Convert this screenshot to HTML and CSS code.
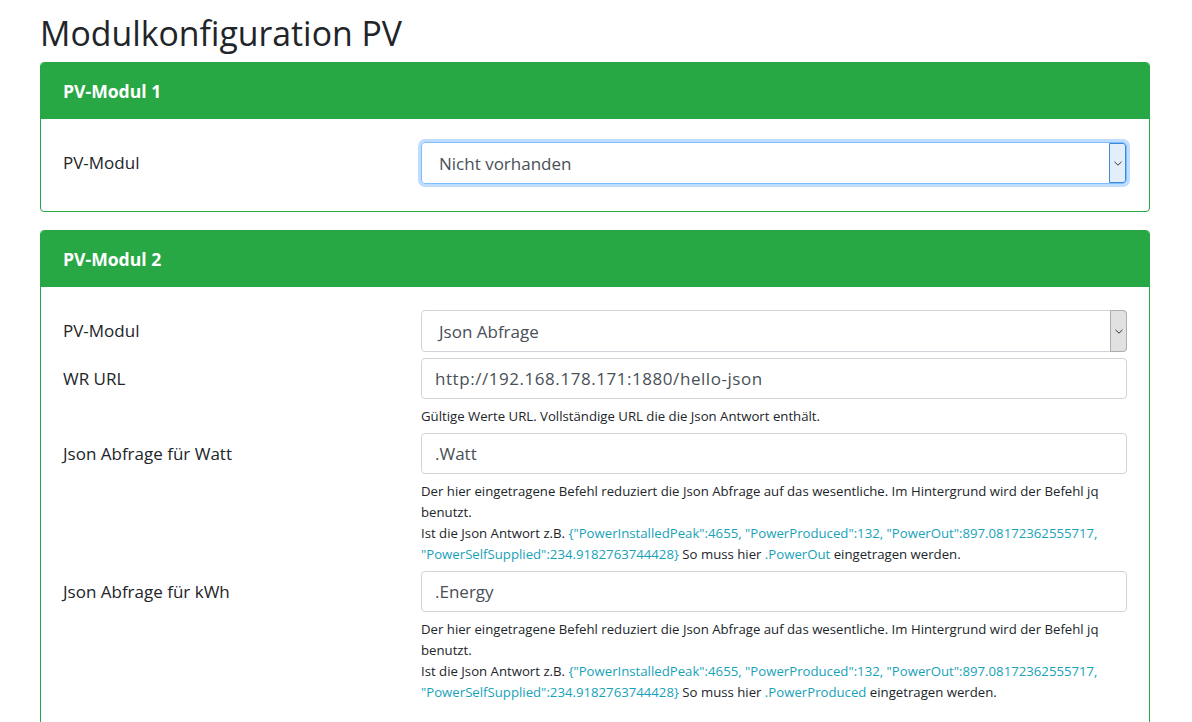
FILE: index.html
```html
<!DOCTYPE html>
<html lang="de">
<head>
<meta charset="utf-8">
<title>Modulkonfiguration PV</title>
<link rel="stylesheet" href="styles.css">
</head>
<body>
<div class="page">
  <h1 class="title">Modulkonfiguration PV</h1>

  <section class="card">
    <div class="card-header">PV-Modul 1</div>
    <div class="card-body">
      <div class="row">
        <label class="label">PV-Modul</label>
        <div class="field">
          <div class="select focused">
            <span class="select-text">Nicht vorhanden</span>
            <span class="select-btn"><svg width="8" height="5" viewBox="0 0 8 5"><path d="M0.5 0.8 L4 4.2 L7.5 0.8" fill="none" stroke="#333" stroke-width="1"/></svg></span>
          </div>
        </div>
      </div>
    </div>
  </section>

  <section class="card">
    <div class="card-header">PV-Modul 2</div>
    <div class="card-body">
      <div class="row">
        <label class="label">PV-Modul</label>
        <div class="field">
          <div class="select">
            <span class="select-text">Json Abfrage</span>
            <span class="select-btn"><svg width="8" height="5" viewBox="0 0 8 5"><path d="M0.5 0.8 L4 4.2 L7.5 0.8" fill="none" stroke="#333" stroke-width="1"/></svg></span>
          </div>
        </div>
      </div>
      <div class="row">
        <label class="label">WR URL</label>
        <div class="field">
          <div class="input input-url">http://192.168.178.171:1880/hello-json</div>
          <div class="help">Gültige Werte URL. Vollständige URL die die Json Antwort enthält.</div>
        </div>
      </div>
      <div class="row">
        <label class="label">Json Abfrage für Watt</label>
        <div class="field">
          <div class="input">.Watt</div>
          <div class="help">Der hier eingetragene Befehl reduziert die Json Abfrage auf das wesentliche. Im Hintergrund wird der Befehl jq benutzt.<br>Ist die Json Antwort z.B. <span class="info">{"PowerInstalledPeak":4655, "PowerProduced":132, "PowerOut":897.08172362555717, "PowerSelfSupplied":234.9182763744428}</span> So muss hier <span class="info">.PowerOut</span> eingetragen werden.</div>
        </div>
      </div>
      <div class="row">
        <label class="label">Json Abfrage für kWh</label>
        <div class="field">
          <div class="input">.Energy</div>
          <div class="help">Der hier eingetragene Befehl reduziert die Json Abfrage auf das wesentliche. Im Hintergrund wird der Befehl jq benutzt.<br>Ist die Json Antwort z.B. <span class="info">{"PowerInstalledPeak":4655, "PowerProduced":132, "PowerOut":897.08172362555717, "PowerSelfSupplied":234.9182763744428}</span> So muss hier <span class="info">.PowerProduced</span> eingetragen werden.</div>
        </div>
      </div>
    </div>
  </section>
</div>
</body>
</html>
```

FILE: styles.css
```css
* { box-sizing: border-box; }

html, body {
  margin: 0;
  padding: 0;
  background: #ffffff;
}

body {
  font-family: "Open Sans", "Noto Sans", "Liberation Sans", sans-serif;
  color: #212529;
  font-size: 17px;
}

.page {
  padding: 12px 42px 0 40px;
}

.title {
  margin: 0 0 8px 0;
  font-weight: 400;
  font-size: 33.8px;
  line-height: 42px;
  color: #212529;
}

.card {
  border: 1px solid #28a745;
  border-radius: 4px;
  margin-bottom: 18px;
  overflow: hidden;
}

.card-header {
  background: #28a745;
  color: #ffffff;
  font-weight: 700;
  font-size: 17.6px;
  height: 56px;
  line-height: 57px;
  padding: 0 22px;
}

.card-body {
  padding: 23px 22px 27px 22px;
}

.row {
  display: grid;
  grid-template-columns: 358px 1fr;
  margin-bottom: 6px;
}

.row:last-child { margin-bottom: 0; }

.label {
  font-size: 17px;
  line-height: 41px;
  color: #212529;
}

.field { min-width: 0; }

.select {
  position: relative;
  height: 42px;
  border: 1px solid #ced4da;
  border-radius: 4px;
  display: flex;
  align-items: center;
  padding-left: 17px;
  color: #495057;
  font-size: 17px;
}

.select.focused {
  border-color: #80bdff;
  box-shadow: 0 0 0 3px rgba(0, 123, 255, 0.25);
}

.select-text { flex: 1; }

.select-btn {
  align-self: stretch;
  width: 17px;
  margin: -1px -1px -1px 0;
  background: #e1e1e1;
  border: 1px solid #adadad;
  border-radius: 0 4px 4px 0;
  display: flex;
  align-items: center;
  justify-content: center;
}

.select.focused .select-btn {
  background: #e2eefa;
  border-color: #3b8ad8;
  border-radius: 0 3px 3px 0;
  margin: 0;
}

.input {
  height: 41px;
  border: 1px solid #ced4da;
  border-radius: 4px;
  padding: 0 13px;
  line-height: 39px;
  color: #495057;
  font-size: 17px;
}

.input-url { letter-spacing: 0.55px; }

.help {
  margin-top: 7px;
  font-size: 13.2px;
  line-height: 21px;
  color: #212529;
}

.info { color: #17a2b8; }
```
